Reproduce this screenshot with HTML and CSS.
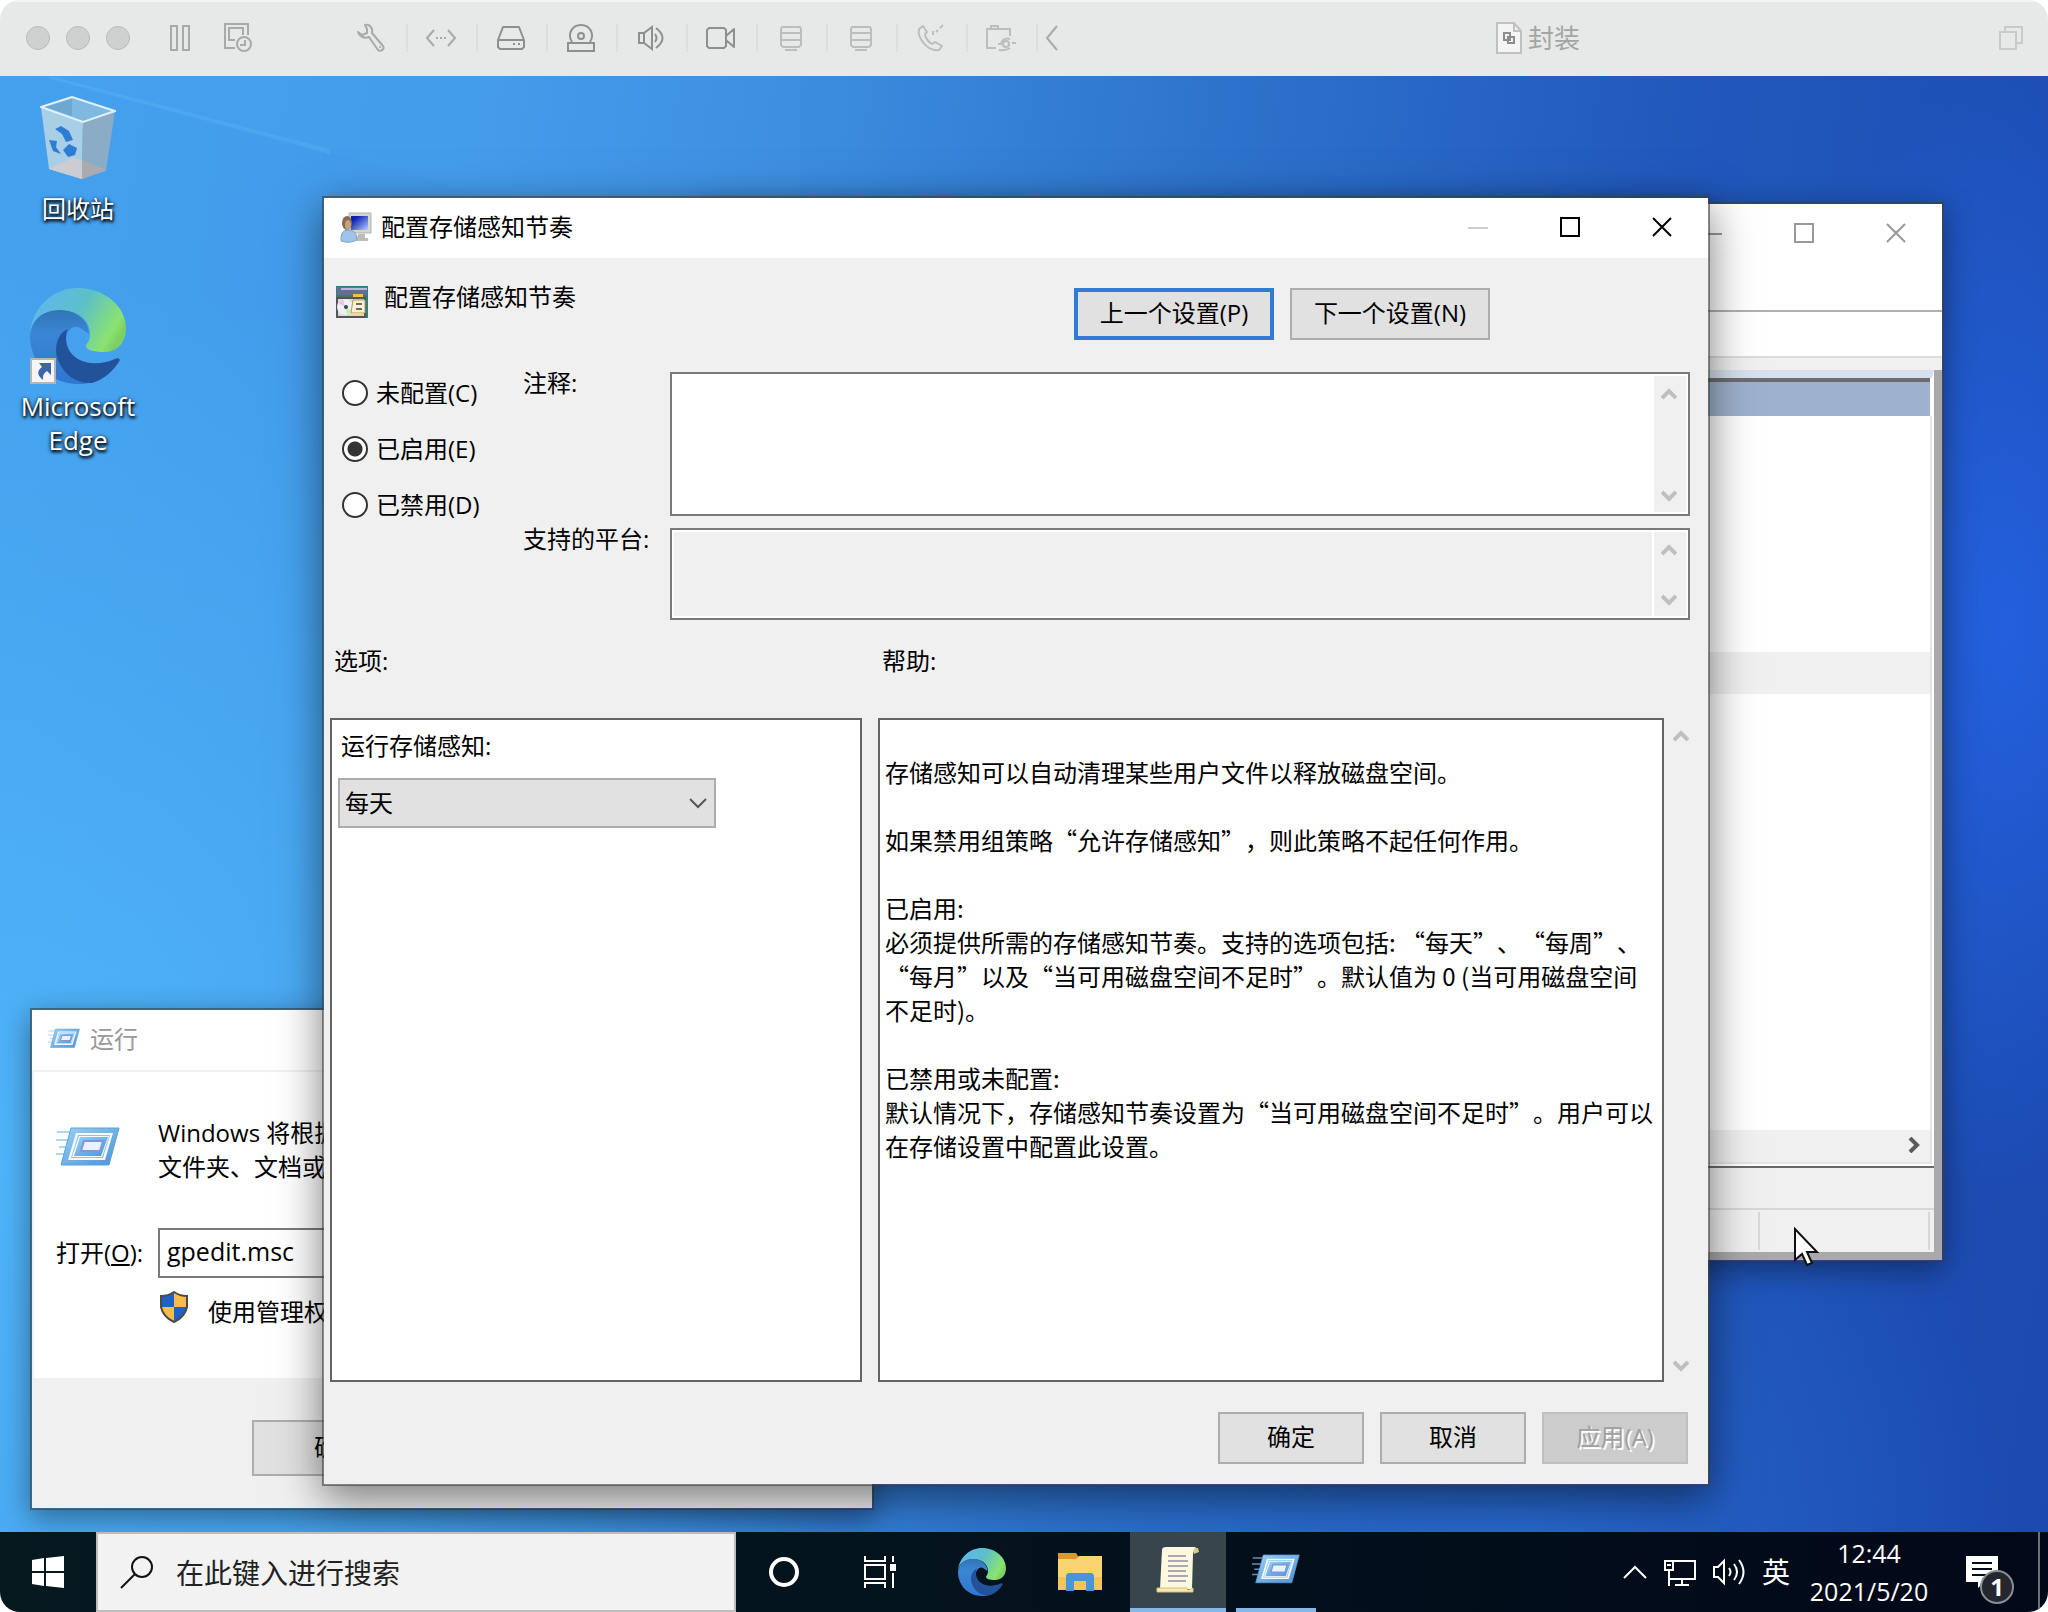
FILE: index.html
```html
<!DOCTYPE html>
<html lang="zh-CN">
<head>
<meta charset="UTF-8">
<meta name="viewport" content="width=device-width, initial-scale=1.0">
<title>封装</title>
<link rel="stylesheet" href="styles.css">
</head>
<body>

<!-- shared icons -->
<svg class="defs" width="0" height="0" aria-hidden="true">
    <defs>
        <linearGradient id="edgeTop" x1="0" y1="0.2" x2="1" y2="0.6">
            <stop offset="0" stop-color="#5fb6f2"/>
            <stop offset="0.5" stop-color="#5cc0c8"/>
            <stop offset="0.9" stop-color="#8be36f"/>
            <stop offset="1" stop-color="#7bd063"/>
        </linearGradient>
        <linearGradient id="edgeLeft" x1="0.4" y1="0" x2="0.4" y2="1">
            <stop offset="0" stop-color="#2f74b4"/>
            <stop offset="0.3" stop-color="#3b86d4"/>
            <stop offset="1" stop-color="#2f76d2"/>
        </linearGradient>
        <linearGradient id="runBlue" x1="0" y1="0" x2="1" y2="1">
            <stop offset="0" stop-color="#9bd0f2"/>
            <stop offset="1" stop-color="#4a93da"/>
        </linearGradient>
        <linearGradient id="screenBlue" x1="0" y1="0" x2="1" y2="1">
            <stop offset="0.2" stop-color="#0a1fb4"/>
            <stop offset="1" stop-color="#b8ccff"/>
        </linearGradient>
    </defs>
    <symbol id="edge" viewBox="0 0 96 96">
        <path fill="url(#edgeLeft)" d="M0 48C2 30 14 22 30 22C48 22 59 34 59 46L50 40C44 36 36 42 34 56C34 76 48 88 62 94C56 96 52 96 48 96C20 96 0 74 0 48Z"/>
        <path fill="#22529a" d="M38 41C26 46 24 62 28 72C34 88 48 96 62 95C74 92 84 82 90 72C89 70 87 70 85 71C64 80 44 74 38 60C35 52 36 44 38 41Z"/>
        <path fill="url(#edgeTop)" d="M0 44C3 18 24 0 48 0C76 0 96 20 96 40C96 56 86 64 74 64C64 64 55 62 56 57C58 54 60 52 60 46C60 32 48 22 30 22C14 22 3 30 0 44Z"/>
    </symbol>
    <symbol id="run" viewBox="0 0 64 42">
        <path stroke="#8ec4ee" stroke-width="2" opacity="0.7" d="M1 5H14M0 13H12M3 20H11M0 27H9"/>
        <path fill="url(#runBlue)" stroke="#5c9fd8" stroke-width="1" d="M15 1H63L53 38H5Z"/>
        <path fill="#f4f9fd" d="M20 6H57L49 33H12Z"/>
        <path fill="#8cc3ee" d="M22 8H54L47 31H15Z"/>
        <path fill="#f4f9fd" d="M23 9H53L46 30H16Z"/>
        <path fill="url(#runBlue)" d="M24 10H52L45 29H18Z"/>
        <path fill="#eaf2ff" stroke="#7f97d8" stroke-width="2" d="M28 14H47L44 24H25Z"/>
    </symbol>
    <symbol id="up" viewBox="0 0 16 12">
        <path fill="none" stroke="currentColor" stroke-width="4" d="M1 10L8 3L15 10"/>
    </symbol>
    <symbol id="down" viewBox="0 0 16 12">
        <path fill="none" stroke="currentColor" stroke-width="4" d="M1 2L8 9L15 2"/>
    </symbol>
    <symbol id="min" viewBox="0 0 20 20"><path stroke="currentColor" stroke-width="2" d="M0 11H20"/></symbol>
    <symbol id="max" viewBox="0 0 20 20"><path fill="none" stroke="currentColor" stroke-width="2" d="M1 1H19V19H1Z"/></symbol>
    <symbol id="close" viewBox="0 0 20 20"><path stroke="currentColor" stroke-width="2" d="M1 1L19 19M19 1L1 19"/></symbol>
    <symbol id="stack" viewBox="0 0 26 28">
        <path fill="none" stroke="currentColor" stroke-width="2" d="M4 3H22L23 5V21L21 23H5L3 21V5ZM3 9H23M3 16H23M7 26H19"/>
    </symbol>
</svg>

<div class="vm">
    <header class="vm-bar">
        <div class="lights">
            <button class="light" aria-label="关闭"></button>
            <button class="light" aria-label="最小化"></button>
            <button class="light" aria-label="缩放"></button>
        </div>
        <div class="vm-main">
            <button aria-label="暂停"><svg width="22" height="26" viewBox="0 0 22 26"><path fill="none" stroke="currentColor" stroke-width="2" d="M2 1H8V25H2ZM14 1H20V25H14Z"/></svg></button>
            <button aria-label="快照"><svg width="30" height="30" viewBox="0 0 30 30"><path fill="none" stroke="currentColor" stroke-width="2" d="M12 25H2V1H25V12M12 17H6V5H20V12"/><circle cx="21" cy="21" r="7" fill="none" stroke="currentColor" stroke-width="2"/><path fill="none" stroke="currentColor" stroke-width="2" d="M22 17V22H17"/></svg></button>
        </div>
        <div class="vm-devices">
            <button aria-label="设置"><svg width="30" height="30" viewBox="0 0 30 30"><path fill="none" stroke="currentColor" stroke-width="2" stroke-linejoin="round" d="M9 2C14 1 17 5 16 10L27 23C29 26 25 29 22 27L13 14C8 16 3 13 2 9L6 12L11 10V6Z"/><circle cx="24" cy="24" r="1" fill="currentColor"/></svg></button>
            <button aria-label="网络"><svg width="32" height="18" viewBox="0 0 32 18"><path fill="none" stroke="currentColor" stroke-width="2" d="M9 1L2 9L9 17M23 1L30 9L23 17M11 9H13M15 9H17M19 9H21"/></svg></button>
            <button class="dark" aria-label="硬盘"><svg width="30" height="26" viewBox="0 0 30 26"><path fill="none" stroke="currentColor" stroke-width="2" stroke-linejoin="round" d="M7 2H23L28 15V22L26 24H4L2 22V15ZM2 15H28"/><path stroke="currentColor" stroke-width="2" d="M17 19H19M22 19H24"/></svg></button>
            <button class="dark" aria-label="光驱"><svg width="30" height="30" viewBox="0 0 30 30"><path fill="none" stroke="currentColor" stroke-width="2" d="M6 19C1 11 6 2 15 2S29 11 24 19M2 20H28V28H2Z"/><circle cx="15" cy="13" r="3" fill="none" stroke="currentColor" stroke-width="2"/></svg></button>
            <button class="dark" aria-label="声音"><svg width="30" height="26" viewBox="0 0 30 26"><path fill="none" stroke="currentColor" stroke-width="2" d="M3 8H8L16 2V24L8 18H3ZM8 8V18M19 9Q22 13 19 17M20 3Q33 13 20 23"/></svg></button>
            <button class="dark" aria-label="摄像头"><svg width="30" height="26" viewBox="0 0 30 26"><path fill="none" stroke="currentColor" stroke-width="2" stroke-linejoin="round" d="M3 3H18L20 5V21L18 23H3L1 21V5ZM20 11L28 4V22L20 15"/></svg></button>
            <button class="dim" aria-label="共享设备一"><svg width="26" height="28"><use href="#stack"/></svg></button>
            <button class="dim" aria-label="共享设备二"><svg width="26" height="28"><use href="#stack"/></svg></button>
            <button class="dim" aria-label="电话"><svg width="30" height="30" viewBox="0 0 30 30"><path fill="none" stroke="currentColor" stroke-width="2" stroke-linejoin="round" d="M7 3L3 6C1 15 12 29 23 27L26 23L19 19L16 21C12 19 9 14 9 11L11 9Z"/><path fill="none" stroke="currentColor" stroke-width="2" d="M17 12V8M20 9L22 7M24 5L27 2"/></svg></button>
            <button class="dim" aria-label="共享文件夹"><svg width="32" height="28" viewBox="0 0 32 28"><path fill="none" stroke="currentColor" stroke-width="2" d="M11 24H2V5H25V12M6 5V2H13V5M13 20H16Q18 13 25 15M14 26Q21 27 25 24M27 19H31"/><circle cx="21" cy="20" r="3" fill="none" stroke="currentColor" stroke-width="2"/></svg></button>
            <button aria-label="收起"><svg width="14" height="26" viewBox="0 0 14 26"><path fill="none" stroke="currentColor" stroke-width="2" d="M12 1L2 13L12 25"/></svg></button>
        </div>
        <div class="vm-title">
            <svg width="26" height="32" viewBox="0 0 26 32"><path fill="#f4f4f4" stroke="#c0c0c0" stroke-width="2" d="M1 1H18L25 9V31H1Z"/><path fill="none" stroke="#c0c0c0" stroke-width="2" d="M18 1V9H25"/><path fill="none" stroke="#8c8c8c" stroke-width="2" d="M8 11H14V18H8ZM12 15H18V21H12Z"/></svg>
            <span>封装</span>
        </div>
        <button class="vm-restore" aria-label="还原窗口"><svg width="26" height="26" viewBox="0 0 26 26"><path fill="none" stroke="currentColor" stroke-width="2" d="M2 7H18V24H2ZM7 7V2H24V18H18"/></svg></button>
    </header>

    <main class="desktop">
        <svg class="rays" viewBox="0 0 2048 1456" preserveAspectRatio="none" aria-hidden="true">
            <path fill="#6cc0ff" opacity="0.22" d="M50 0L330 73V78L50 3Z"/>
            <path fill="#6cc0ff" opacity="0.05" d="M50 2L330 76L800 210V0Z"/>
        </svg>

        <a class="shortcut bin" href="#">
            <svg width="76" height="84" viewBox="0 0 76 84">
                <path fill="#a9cfe6" d="M1 11L43 26L42 83L9 73Z"/>
                <path fill="#8aacc6" d="M43 26L75 15L66 75L42 83Z"/>
                <path fill="#7db9e0" stroke="#e2f0f8" stroke-width="2" d="M1 11L32 1L75 15L43 26Z"/>
                <path fill="#6ea8d0" d="M5 11L32 3V20Z"/>
                <path fill="#cccdd2" d="M9 73L32 62L42 64V83Z"/>
                <path fill="#a9abb0" d="M42 64L66 74L42 83Z"/>
                <path fill="#2f7cd6" d="M15 33L21 30L29 35L33 44L26 46L22 38ZM9 44L17 45L16 51L21 58L13 55ZM23 54L29 48L37 52L35 59L28 61Z"/>
            </svg>
            <span>回收站</span>
        </a>
        <a class="shortcut edge" href="#">
            <svg width="96" height="96" viewBox="0 0 96 96">
                <use href="#edge"/>
                <path fill="#f5f5f5" stroke="#b5b5b5" stroke-width="2" d="M1 71H25V95H1Z"/>
                <path fill="#3c64a8" d="M9 75H21V87L17 83Q12 86 13 92Q4 85 12 79Z"/>
            </svg>
            <span class="latin">Microsoft<br>Edge</span>
        </a>

        <section class="window editor" aria-label="本地组策略编辑器">
            <div class="titlebar inactive">
                <div class="caption">
                    <button aria-label="最小化"><svg width="20" height="20"><use href="#min"/></svg></button>
                    <button aria-label="最大化"><svg width="20" height="20"><use href="#max"/></svg></button>
                    <button aria-label="关闭"><svg width="20" height="20"><use href="#close"/></svg></button>
                </div>
            </div>
            <div class="editor-menu"></div>
            <div class="editor-tools"></div>
            <div class="editor-gap"></div>
            <div class="editor-frame">
                <div class="editor-list">
                    <div class="list-head"></div>
                    <div class="list-space"></div>
                    <div class="list-row"></div>
                    <div class="list-rest"></div>
                    <div class="hscroll"><svg width="12" height="16" viewBox="0 0 12 16"><path fill="none" stroke="#5c5c5c" stroke-width="4" d="M2 1L9 8L2 15"/></svg></div>
                </div>
                <div class="editor-tabs"></div>
                <div class="editor-status"><span></span><span></span></div>
            </div>
        </section>

        <section class="window run" aria-label="运行">
            <div class="titlebar inactive">
                <svg width="32" height="22"><use href="#run"/></svg>
                <span>运行</span>
            </div>
            <div class="run-body">
                <svg class="run-icon" width="64" height="42"><use href="#run"/></svg>
                <p>Windows 将根据你所输入的名称，为你打开相应的程序、<br>文件夹、文档或 Internet 资源。</p>
                <label for="open">打开(<u>O</u>):</label>
                <input id="open" type="text" value="gpedit.msc">
                <div class="run-admin">
                    <svg width="28" height="32" viewBox="0 0 28 32">
                        <path fill="#f6bd4d" d="M14 1Q20 5 27 5V16Q25 26 14 31Q3 26 1 16V5Q8 5 14 1Z"/>
                        <path fill="#1e62c8" d="M14 1V16H1V5Q8 5 14 1ZM14 16H27Q25 26 14 31Z"/>
                        <path fill="none" stroke="#4a4a4a" stroke-width="2" d="M14 1Q20 5 27 5V16Q25 26 14 31Q3 26 1 16V5Q8 5 14 1Z"/>
                    </svg>
                    <span>使用管理权限创建此任务。</span>
                </div>
            </div>
            <div class="run-footer">
                <button class="button">确定</button>
                <button class="button">取消</button>
                <button class="button">浏览(B)...</button>
            </div>
        </section>

        <section class="window dialog" aria-label="配置存储感知节奏">
            <div class="titlebar">
                <svg width="32" height="32" viewBox="0 0 32 32">
                    <path fill="#d5d5cd" stroke="#b3b3aa" stroke-width="1" d="M9 2H31V22H9Z"/>
                    <path fill="url(#screenBlue)" d="M11 5H28V19H11Z"/>
                    <path fill="#bdbdb8" d="M18 23H25V27H28V30H16Z"/>
                    <ellipse cx="7" cy="12" rx="5" ry="7" fill="#8a6a50"/>
                    <ellipse cx="8" cy="14" rx="3" ry="5" fill="#c9a27c"/>
                    <path fill="#9fc4ea" stroke="#7fa5cc" stroke-width="1" d="M1 30Q0 19 8 19Q17 19 17 29Q9 33 1 30Z"/>
                </svg>
                <span>配置存储感知节奏</span>
                <div class="caption">
                    <button disabled aria-label="最小化"><svg width="20" height="20"><use href="#min"/></svg></button>
                    <button aria-label="最大化"><svg width="20" height="20"><use href="#max"/></svg></button>
                    <button aria-label="关闭"><svg width="20" height="20"><use href="#close"/></svg></button>
                </div>
            </div>

            <div class="policy">
                <svg width="32" height="32" viewBox="0 0 32 32">
                    <path fill="#2f8082" d="M0 0H32V32H0Z"/>
                    <path fill="#6a6a96" d="M1 1H31V9H1Z"/>
                    <path fill="#b9bad8" d="M5 2H31V4H5Z"/>
                    <path fill="#3f7d52" d="M1 9H31V12H1Z"/>
                    <path fill="#f0c23c" d="M17 8H27V12H17Z"/>
                    <path fill="#d9d9d9" stroke="#555" stroke-width="2" d="M1 12H29V31H1Z"/>
                    <circle cx="9" cy="21" r="8" fill="#eef0f4"/>
                    <path fill="#e8c4ec" d="M9 21L2 17L7 13Z"/>
                    <path fill="#c4ecc0" d="M9 21L16 25L11 29Z"/>
                    <circle cx="10" cy="21" r="2" fill="#444"/>
                    <path fill="#fbf3cf" stroke="#b09a5c" stroke-width="1" d="M17 14H29V27H15Z"/>
                    <path stroke="#6b6b6b" stroke-width="2" d="M20 18H26M20 23H26"/>
                    <path fill="#f0d98a" d="M14 27H27V30H14Z"/>
                </svg>
                <span>配置存储感知节奏</span>
                <div class="policy-nav">
                    <button class="button default">上一个设置(P)</button>
                    <button class="button">下一个设置(N)</button>
                </div>
            </div>

            <div class="state">
                <div class="radios">
                    <label><input type="radio" name="state">未配置(C)</label>
                    <label><input type="radio" name="state" checked>已启用(E)</label>
                    <label><input type="radio" name="state">已禁用(D)</label>
                </div>
                <label for="comment">注释:</label>
                <div class="field">
                    <textarea id="comment"></textarea>
                    <div class="scroll"><svg width="16" height="12"><use href="#up"/></svg><svg width="16" height="12"><use href="#down"/></svg></div>
                </div>
                <label for="platform">支持的平台:</label>
                <div class="field readonly">
                    <textarea id="platform" readonly></textarea>
                    <div class="scroll"><svg width="16" height="12"><use href="#up"/></svg><svg width="16" height="12"><use href="#down"/></svg></div>
                </div>
            </div>

            <div class="details">
                <h2>选项:</h2>
                <h2>帮助:</h2>
                <div class="options">
                    <label for="cadence">运行存储感知:</label>
                    <div class="combo">
                        <select id="cadence">
                            <option>每天</option>
                            <option>每周</option>
                            <option>每月</option>
                        </select>
                        <svg width="20" height="12" viewBox="0 0 20 12"><path fill="none" stroke="#555" stroke-width="2" d="M2 1L10 9L18 1"/></svg>
                    </div>
                </div>
                <div class="help">
                    <div class="help-text">
                        <p>存储感知可以自动清理某些用户文件以释放磁盘空间。</p>
                        <p>如果禁用组策略“允许存储感知”，则此策略不起任何作用。</p>
                        <p>已启用:<br>必须提供所需的存储感知节奏。支持的选项包括: “每天”、“每周”、<br>“每月”以及“当可用磁盘空间不足时”。默认值为 0 (当可用磁盘空间<br>不足时)。</p>
                        <p>已禁用或未配置:<br>默认情况下，存储感知节奏设置为“当可用磁盘空间不足时”。用户可以<br>在存储设置中配置此设置。</p>
                    </div>
                    <div class="scroll"><svg width="16" height="12"><use href="#up"/></svg><svg width="16" height="12"><use href="#down"/></svg></div>
                </div>
            </div>

            <div class="dialog-footer">
                <button class="button">确定</button>
                <button class="button">取消</button>
                <button class="button" disabled>应用(A)</button>
            </div>
        </section>

        <svg class="pointer" width="26" height="40" viewBox="0 0 26 40"><path fill="#fff" stroke="#111" stroke-width="2" d="M1 2V33L8 27L13 38L18 36L13 25H23Z"/></svg>
    </main>

    <footer class="taskbar">
        <button class="start" aria-label="开始"><svg width="32" height="32" viewBox="0 0 32 32"><path fill="#fff" d="M0 4L12 2V15H0ZM14 2L32 0V15H14ZM0 17H12V30L0 28ZM14 17H32V32L14 30Z"/></svg></button>
        <label class="search">
            <svg width="34" height="34" viewBox="0 0 34 34"><circle cx="22" cy="12" r="10" fill="none" stroke="#111" stroke-width="2"/><path stroke="#111" stroke-width="2" d="M15 19L1 33"/></svg>
            <input type="text" placeholder="在此键入进行搜索" aria-label="搜索">
        </label>
        <button class="task" aria-label="Cortana"><svg width="32" height="32" viewBox="0 0 32 32"><circle cx="16" cy="16" r="13" fill="none" stroke="#fff" stroke-width="4"/></svg></button>
        <button class="task" aria-label="任务视图"><svg width="34" height="32" viewBox="0 0 34 32"><path fill="none" stroke="#fff" stroke-width="2" d="M2 0V5H22V0M2 9H22V23H2ZM2 32V27H22V32M30 0V6M30 17V32"/><path fill="#fff" d="M27 8H33V15H27Z"/></svg></button>
        <div class="apps">
            <button class="task" aria-label="Microsoft Edge"><svg width="48" height="48"><use href="#edge"/></svg></button>
            <button class="task" aria-label="文件资源管理器"><svg width="44" height="38" viewBox="0 0 44 38"><path fill="#d99a2b" d="M0 0H18L20 3V8H0Z"/><path fill="#fad473" d="M0 6H18L21 3H44V37H0Z"/><path fill="#f3c558" d="M0 24H44V37H0Z"/><path fill="#4a94dc" d="M8 22L10 20H34L36 22V38H28V28H16V38H8Z"/></svg></button>
            <button class="task active" aria-label="本地组策略编辑器"><svg width="44" height="48" viewBox="0 0 44 48"><path fill="#e0cb84" d="M36 2H42L43 6L38 8Z"/><path fill="#fdf8e0" d="M6 4Q6 1 10 1H40Q37 3 37 8L36 43H4Z"/><path fill="#f6e9b4" stroke="#d8c070" stroke-width="1" d="M1 42H31Q31 46 37 42V46H1Z"/><path stroke="#aaa9b4" stroke-width="2" d="M12 10H30M12 15H32M12 20H32M12 25H30M12 30H32M12 35H30"/></svg></button>
            <button class="task open" aria-label="运行"><svg width="48" height="32"><use href="#run"/></svg></button>
        </div>
        <div class="tray">
            <button aria-label="显示隐藏的图标"><svg width="24" height="16" viewBox="0 0 24 16"><path fill="none" stroke="#fff" stroke-width="2" d="M1 14L12 3L23 14"/></svg></button>
            <button aria-label="网络"><svg width="32" height="28" viewBox="0 0 32 28"><path fill="none" stroke="#fff" stroke-width="2" d="M10 3H31V21H6M1 3H9V12H1ZM5 12V28M18 21V26M11 27H25M3 7H7"/></svg></button>
            <button aria-label="音量"><svg width="32" height="28" viewBox="0 0 32 28"><path fill="none" stroke="#fff" stroke-width="2" d="M1 9H5L11 3V25L5 19H1ZM16 10Q19 14 16 18M21 6Q27 14 21 22M26 2Q35 14 26 26"/></svg></button>
            <button class="ime">英</button>
            <button class="clock">12:44<br>2021/5/20</button>
            <button class="notify" aria-label="通知">
                <svg width="32" height="32" viewBox="0 0 32 32"><path fill="#fff" d="M0 0H32V26H18L12 32V26H0Z"/><path stroke="#020b18" stroke-width="2" d="M6 7H26M6 13H26M6 19H20"/></svg>
                <span class="badge">1</span>
            </button>
        </div>
    </footer>
</div>

</body>
</html>
```
FILE: styles.css
```css
* {
    box-sizing: border-box;
}
body {
    margin: 0;
    background-color: #fff;
    color: #000;
    font-family: "Open Sans", "Noto Sans CJK SC", sans-serif;
    font-size: 24px;
    line-height: 34px;
}
button, input, select, textarea {
    font: inherit;
    color: inherit;
    margin: 0;
    padding: 0;
    border: none;
    border-radius: 0;
    background: none;
    outline: none;
}
svg {
    display: block;
    flex: none;
}
p, h2 {
    margin: 0;
    font-size: inherit;
    font-weight: normal;
}
.defs {
    position: absolute;
}
.vm {
    display: flex;
    flex-direction: column;
    height: 100vh;
    border-radius: 20px;
    overflow: hidden;
}

/* host toolbar */
.vm-bar {
    flex: none;
    display: flex;
    align-items: center;
    height: 76px;
    padding: 0 24px 2px 26px;
    background-color: #e7e9e8;
    border-top: 2px solid #f3f4f4;
    color: #a8aaa9;
}
.vm-bar button {
    display: flex;
    align-items: center;
    justify-content: center;
}
.lights {
    display: flex;
    gap: 16px;
}
.lights .light {
    width: 24px;
    height: 24px;
    border: 1px solid #b9bbba;
    border-radius: 50%;
    background-color: #cfd1d0;
}
.vm-main {
    display: flex;
    gap: 32px;
    margin-left: 39px;
}
.vm-devices {
    display: flex;
    align-items: center;
    margin-left: 85px;
}
.vm-devices button {
    width: 70px;
    height: 28px;
    padding-right: 3px;
    border-right: 2px solid #dcdedd;
}
.vm-devices button:last-child {
    width: 28px;
    padding: 0;
    border: none;
}
.vm-devices .dark {
    color: #8e908f;
}
.vm-devices .dim {
    color: #bcbebd;
}
.vm-title {
    display: flex;
    align-items: center;
    gap: 6px;
    margin: 0 auto;
    padding-left: 12px;
    color: #a3a5a4;
    font-size: 26px;
}
.vm-restore {
    color: #c8cac9;
}

/* desktop */
.desktop {
    flex: 1;
    position: relative;
    overflow: hidden;
    background:
        radial-gradient(ellipse 240px 560px at 98% 38%, rgba(38, 104, 240, 0.7), rgba(38, 104, 240, 0)),
        radial-gradient(ellipse 500px 400px at 74% 100%, rgba(44, 116, 216, 0.5), rgba(44, 116, 216, 0)),
        radial-gradient(ellipse 900px 900px at 0% 75%, rgba(84, 190, 255, 0.7), rgba(84, 190, 255, 0)),
        linear-gradient(98deg, #45a1ee 0%, #429aea 22%, #3a8ade 38%, #2d72cc 55%, #2259bd 74%, #1b49b0 100%);
}
.rays {
    position: absolute;
    width: 100%;
    height: 100%;
}
.shortcut {
    position: absolute;
    left: 8px;
    width: 140px;
    display: flex;
    flex-direction: column;
    align-items: center;
    color: #fff;
    text-align: center;
    text-decoration: none;
    text-shadow: 1px 2px 3px #000, 0 1px 4px #000;
}
.shortcut.bin {
    top: 20px;
    gap: 12px;
}
.shortcut.edge {
    top: 212px;
    gap: 5px;
}
.shortcut .latin {
    font-size: 26px;
}

/* windows */
.window {
    position: absolute;
    display: flex;
    flex-direction: column;
    border: 2px solid rgba(60, 60, 60, 0.6);
    background-color: #f0f0f0;
    background-clip: padding-box;
    box-shadow: 0 8px 28px rgba(0, 0, 0, 0.4);
}
.titlebar {
    flex: none;
    display: flex;
    align-items: center;
    gap: 9px;
    height: 60px;
    padding: 0 0 3px 16px;
    background-color: #fff;
}
.titlebar.inactive {
    color: #999;
}
.caption {
    display: flex;
    align-self: stretch;
    margin-left: auto;
}
.caption button {
    display: flex;
    align-items: center;
    justify-content: center;
    width: 92px;
}
.caption button:disabled {
    color: #ccc;
}
.button {
    height: 52px;
    padding-bottom: 2px;
    border: 2px solid #adadad;
    background-color: #e1e1e1;
    text-align: center;
}
.button.default {
    border: 4px solid #2f7bd6;
}
.button:disabled {
    border-color: #bfbfbf;
    background-color: #ccc;
    color: #a0a0a0;
    text-shadow: 2px 2px 0 #fff;
}
.scroll {
    flex: none;
    display: flex;
    flex-direction: column;
    align-items: center;
    justify-content: space-between;
    width: 32px;
    padding: 12px 2px 10px 0;
    background-color: #f0f0f0;
    color: #bfbfbf;
}

/* policy editor behind */
.editor {
    left: 700px;
    top: 126px;
    width: 1244px;
    height: 1060px;
}
.editor-menu {
    flex: none;
    height: 48px;
    border-bottom: 2px solid #b0b0b4;
    background-color: #fff;
}
.editor-tools {
    flex: none;
    height: 46px;
    border-bottom: 2px solid #dcdcdc;
    background-color: #fff;
}
.editor-gap {
    flex: none;
    height: 12px;
}
.editor-frame {
    flex: 1;
    display: flex;
    flex-direction: column;
    border: solid #a9a9a9;
    border-width: 0 8px 8px 0;
    background-color: #f0f0f0;
}
.editor-list {
    flex: 1;
    display: flex;
    flex-direction: column;
    border-top: 8px solid #d6e1ed;
    border-right: 2px solid #fff;
    border-bottom: 2px solid #fff;
    background-color: #fff;
}
.list-head {
    height: 38px;
    margin-right: 2px;
    border-top: 4px solid #6d6d6d;
    background-color: #9eb2ce;
}
.list-space {
    height: 236px;
}
.list-row {
    height: 42px;
    background-color: #f0f0f0;
}
.list-rest {
    flex: 1;
}
.list-space, .list-row, .list-rest {
    border-right: 2px solid #e3e3e3;
}
.hscroll {
    display: flex;
    align-items: center;
    justify-content: flex-end;
    height: 34px;
    padding: 0 10px 2px 0;
    border: solid #e3e3e3;
    border-width: 0 2px 2px 0;
    background-color: #f0f0f0;
}
.editor-tabs {
    height: 42px;
    border-top: 2px solid #696969;
}
.editor-status {
    display: flex;
    justify-content: flex-end;
    height: 44px;
    padding: 2px 4px 2px 0;
    border-top: 2px solid #d7d7d7;
}
.editor-status span {
    width: 170px;
    border-right: 2px solid #d7d7d7;
}

/* run box */
.run {
    left: 30px;
    top: 932px;
    width: 844px;
    height: 502px;
}
.run .titlebar {
    gap: 10px;
}
.run-body {
    flex: 1;
    display: grid;
    grid-template-columns: 102px 1fr;
    align-content: start;
    align-items: center;
    margin-left: 2px;
    padding: 44px 24px 0 22px;
    border-top: 2px solid #f0f0f0;
    background-color: #fff;
}
.run-body p {
    height: 68px;
    white-space: nowrap;
}
.run-icon {
    margin-bottom: 4px;
}
.run-body label, .run-body input {
    margin-top: 44px;
}
.run-body input {
    height: 50px;
    padding: 0 7px 4px;
    border: 2px solid #7a7a7a;
    font-size: 25px;
}
.run-admin {
    grid-column: 2;
    display: flex;
    align-items: flex-start;
    gap: 20px;
    padding: 13px 0 0 2px;
}
.run-admin span {
    padding-top: 4px;
}
.run-footer {
    display: flex;
    gap: 16px;
    height: 130px;
    padding: 42px 0 0 220px;
}
.run-footer .button {
    width: 172px;
    height: 56px;
}

/* policy setting dialog */
.dialog {
    left: 322px;
    top: 120px;
    width: 1388px;
    height: 1290px;
    box-shadow: 0 12px 40px rgba(0, 0, 0, 0.5);
}
.policy {
    display: flex;
    align-items: flex-start;
    gap: 16px;
    padding: 28px 218px 32px 12px;
}
.policy span {
    line-height: 22px;
}
.policy-nav {
    display: flex;
    gap: 16px;
    margin-left: auto;
    padding-top: 2px;
}
.policy-nav .button {
    width: 200px;
}
.state {
    display: grid;
    grid-template-columns: 181px 147px 1fr;
    grid-template-rows: 144px 92px;
    row-gap: 12px;
    padding: 0 18px;
    line-height: 22px;
}
.radios {
    grid-row: 1 / 3;
    display: flex;
    flex-direction: column;
    gap: 30px;
    padding-top: 8px;
}
.radios label {
    display: flex;
    align-items: center;
    gap: 8px;
    height: 26px;
}
.radios input {
    appearance: none;
    width: 26px;
    height: 26px;
    border: 2px solid #333;
    border-radius: 50%;
    background-color: #fff;
}
.radios input:checked {
    background: radial-gradient(circle, #333 7px, #fff 8px);
}
.field {
    display: flex;
    padding: 2px;
    border: 2px solid #7a7a7a;
    background-color: #fff;
}
.field textarea {
    flex: 1;
    resize: none;
}
.field.readonly {
    gap: 2px;
}
.field.readonly textarea {
    background-color: #f0f0f0;
}
.details {
    flex: 1;
    display: grid;
    grid-template-columns: 532px 1fr;
    grid-template-rows: 98px 1fr;
    column-gap: 16px;
    padding: 0 10px 0 6px;
}
.details h2 {
    padding: 24px 0 0 4px;
}
.options {
    padding: 9px 6px;
    border: 2px solid #646464;
    background-color: #fff;
}
.options label {
    display: block;
    padding-left: 3px;
}
.combo {
    position: relative;
    width: 378px;
    margin-top: 15px;
}
.combo select {
    appearance: none;
    display: block;
    width: 100%;
    height: 50px;
    padding-left: 5px;
    border: 2px solid #adadad;
    background-color: #e1e1e1;
}
.combo svg {
    position: absolute;
    right: 8px;
    top: 20px;
    pointer-events: none;
}
.help {
    display: flex;
    gap: 2px;
}
.help-text {
    flex: 1;
    padding: 35px 0 0 5px;
    border: 2px solid #646464;
    background-color: #fff;
    font-family: "Noto Sans CJK SC", sans-serif;
    text-spacing-trim: space-all;
    white-space: nowrap;
}
.help-text p {
    margin-bottom: 34px;
}
.dialog-footer {
    display: flex;
    justify-content: flex-end;
    gap: 16px;
    padding: 30px 20px 20px;
}
.dialog-footer .button {
    width: 146px;
}
.pointer {
    position: absolute;
    left: 1794px;
    top: 1151px;
}

/* taskbar */
.taskbar {
    flex: none;
    display: flex;
    height: 80px;
    background: linear-gradient(90deg, #05191f, #03121d 50%, #020818);
    color: #fff;
}
.taskbar button {
    display: flex;
    align-items: center;
    justify-content: center;
}
.start, .task {
    width: 96px;
}
.search {
    display: flex;
    align-items: center;
    gap: 22px;
    width: 640px;
    padding-left: 22px;
    border: 2px solid #bdbdbd;
    background-color: #f2f2f2;
    color: #222;
    font-size: 28px;
}
.search input {
    flex: 1;
    padding-top: 2px;
}
.search input::placeholder {
    color: #222;
    opacity: 1;
}
.apps {
    display: flex;
    gap: 2px;
    margin-left: 6px;
}
.task.active {
    border-bottom: 4px solid #84b8ea;
    background-color: #38454d;
}
.task.open {
    width: 80px;
    margin: 0 8px;
    border-bottom: 4px solid #84b8ea;
}
.tray {
    display: flex;
    gap: 17px;
    margin-left: auto;
    margin-right: 8px;
    border-right: 2px solid #6b717b;
}
.tray .ime {
    font-size: 28px;
}
.tray .clock {
    width: 124px;
    font-size: 25px;
    line-height: 38px;
    text-align: center;
}
.tray .notify {
    position: relative;
    width: 90px;
    padding-right: 22px;
}
.badge {
    position: absolute;
    left: 32px;
    top: 38px;
    width: 34px;
    height: 34px;
    border: 2px solid #8a8d92;
    border-radius: 50%;
    background-color: #24272d;
    font-weight: bold;
    line-height: 30px;
}
```
